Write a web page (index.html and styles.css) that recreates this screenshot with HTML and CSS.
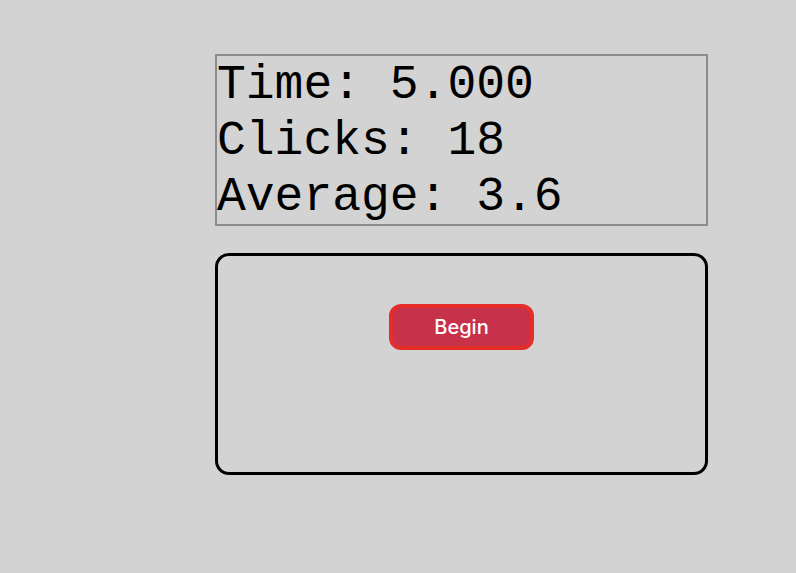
FILE: index.html
```html
<!DOCTYPE html>
<html>
<head>
<meta charset="utf-8">
<link rel="stylesheet" href="styles.css">
</head>
<body>
<div class="wrap">
  <div class="stats">
    <div class="line">Time: 5.000</div>
    <div class="line">Clicks: 18</div>
    <div class="line">Average: 3.6</div>
  </div>
  <div class="area">
    <button class="begin">Begin</button>
  </div>
</div>
</body>
</html>
```
FILE: styles.css
```css
html, body {
  background: #d3d3d3;
}
body {
  margin: 8px;
}
.wrap {
  margin-left: 207px;
  margin-top: 46px;
  width: 493px;
  display: flex;
  flex-direction: column;
  gap: 27px;
}
.stats {
  border: 2px solid #8c8c8c;
  font-family: "Courier New", "Liberation Mono", monospace;
  font-size: 48px;
  line-height: 56px;
  color: #000;
  padding-top: 1px;
  box-sizing: border-box;
  height: 172px;
}
.area {
  border: 3px solid #000;
  border-radius: 14px;
  display: flex;
  justify-content: center;
  align-items: flex-start;
  padding-top: 48px;
  box-sizing: border-box;
  height: 222px;
}
.begin {
  width: 145px;
  height: 46px;
  background: #c8314a;
  border: 4px solid #e52d2a;
  border-radius: 12px;
  color: #fff;
  font-family: Inter, "Liberation Sans", Arial, sans-serif;
  font-weight: 500;
  font-size: 20px;
  padding: 0;
}
```
